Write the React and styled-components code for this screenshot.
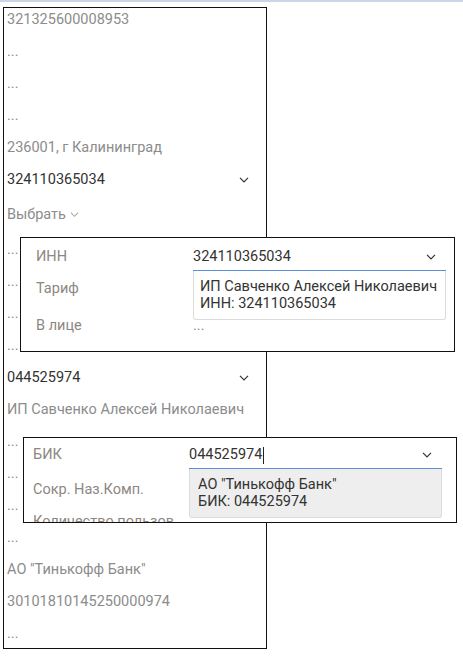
import React from 'react'
import styled, { createGlobalStyle } from 'styled-components'

const GlobalStyle = createGlobalStyle`
  body {
    margin: 0;
    background: #ffffff;
    font-family: Roboto, "Noto Sans", sans-serif;
  }
`

const Page = styled.div`
  position: relative;
  width: 463px;
  height: 657px;
  border-top: 2px solid #cdd5e4;
  box-sizing: border-box;
  overflow: hidden;
`

const Panel = styled.div`
  margin: 5px 0 0 3px;
  width: 264px;
  height: 642px;
  box-sizing: border-box;
  border: 1px solid #111;
  padding: 2px 17px 0 3px;
  display: flex;
  flex-direction: column;
  overflow: hidden;
`

const Row = styled.div`
  height: ${p => p.tall ? 38 : 32}px;
  flex: none;
  display: flex;
  align-items: flex-start;
  justify-content: space-between;
  padding-top: ${p => p.tall ? 3 : 0}px;
  box-sizing: border-box;
`

const Text = styled.span`
  font-size: 14.5px;
  line-height: 20px;
  color: ${p => p.dark ? '#333' : '#8c8c8c'};
  white-space: nowrap;
`

const Select = styled.span`
  display: inline-flex;
  align-items: center;
  gap: 4px;
  font-size: 14.5px;
  line-height: 20px;
  color: #8c8c8c;
`

const ChevronBox = styled.span`
  display: inline-flex;
  align-items: center;
  height: 20px;
`

const Chevron = ({ color = '#333', size = 10 }) => (
  <ChevronBox>
    <svg width={size} height={size * 0.6} viewBox="0 0 10 6">
      <polyline points="1,0.8 5,4.8 9,0.8" fill="none" stroke={color} strokeWidth="1.2" />
    </svg>
  </ChevronBox>
)

const Popup = styled.div`
  position: absolute;
  left: ${p => p.left}px;
  top: ${p => p.top}px;
  width: ${p => p.width}px;
  height: ${p => p.height}px;
  box-sizing: border-box;
  border: 1px solid #111;
  background: #fff;
  display: flex;
  padding-left: ${p => p.padLeft}px;
  overflow: hidden;
`

const LabelCol = styled.div`
  width: ${p => p.width}px;
  flex: none;
  display: flex;
  flex-direction: column;
  padding-top: ${p => p.padTop}px;
`

const Label = styled.div`
  height: ${p => p.h}px;
  max-width: 141px;
  flex: none;
  overflow: hidden;
  font-size: 14.5px;
  line-height: 20px;
  color: #8d8782;
  white-space: nowrap;
`

const ValueCol = styled.div`
  width: 253px;
  flex: none;
  display: flex;
  flex-direction: column;
  padding-top: ${p => p.padTop}px;
`

const Input = styled.div`
  height: 24px;
  box-sizing: border-box;
  border-bottom: 1px solid #5c8fdb;
  display: flex;
  align-items: flex-start;
  justify-content: space-between;
  padding-right: 10px;
`

const InputText = styled.span`
  font-size: 14.5px;
  line-height: 20px;
  color: #333;
  display: inline-flex;
  align-items: center;
`

const Caret = styled.span`
  display: inline-block;
  width: 1px;
  height: 17px;
  background: #222;
  margin-left: 1px;
`

const Option = styled.div`
  height: 49px;
  box-sizing: border-box;
  border: 1px solid #dcdcdc;
  border-top: none;
  border-radius: 0 0 3px 3px;
  background: ${p => p.active ? '#eeeeee' : '#ffffff'};
  padding: 7px ${p => p.padX}px 0;
  display: flex;
  flex-direction: column;
`

const OptionLine = styled.span`
  font-size: 14.5px;
  line-height: 17px;
  color: #333;
  white-space: nowrap;
`

const Muted = styled.span`
  font-size: 14.5px;
  line-height: 20px;
  color: #8c8c8c;
  margin-top: ${p => p.mt || 0}px;
`

const rows = [
  { text: '321325600008953' },
  { text: '...' },
  { text: '...' },
  { text: '...' },
  { text: '236001, г Калининград' },
  { text: '324110365034', dark: true, chevron: true },
  { select: 'Выбрать' },
  { text: '...' },
  { text: '...' },
  { text: '...' },
  { text: '...' },
  { text: '044525974', dark: true, chevron: true },
  { text: 'ИП Савченко Алексей Николаевич' },
  { text: '...' },
  { text: '...' },
  { text: '...' },
  { text: '...' },
  { text: 'АО "Тинькофф Банк"' },
  { text: '30101810145250000974' },
  { text: '...' },
]

export default function App() {
  return (
    <Page>
      <GlobalStyle />
      <Panel>
        {rows.map((r, i) =>
          r.select ? (
            <Row key={i} tall>
              <Select>{r.select}<Chevron color="#a8a8a8" size={9} /></Select>
            </Row>
          ) : (
            <Row key={i}>
              <Text dark={r.dark}>{r.text}</Text>
              {r.chevron && <Chevron />}
            </Row>
          )
        )}
      </Panel>

      <Popup left={20} top={235} width={435} height={115} padLeft={15}>
        <LabelCol width={157} padTop={9}>
          <Label h={32}>ИНН</Label>
          <Label h={37}>Тариф</Label>
          <Label h={32}>В лице</Label>
        </LabelCol>
        <ValueCol padTop={9}>
          <Input>
            <InputText>324110365034</InputText>
            <Chevron />
          </Input>
          <Option padX={6}>
            <OptionLine>ИП Савченко Алексей Николаевич</OptionLine>
            <OptionLine>ИНН: 324110365034</OptionLine>
          </Option>
          <Muted mt={-4}>...</Muted>
        </ValueCol>
      </Popup>

      <Popup left={23} top={435} width={434} height={86} padLeft={9}>
        <LabelCol width={156} padTop={7}>
          <Label h={35}>БИК</Label>
          <Label h={32}>Сокр. Наз.Комп.</Label>
          <Label h={32}>Количество пользователей</Label>
        </LabelCol>
        <ValueCol padTop={7}>
          <Input>
            <InputText>044525974<Caret /></InputText>
            <Chevron />
          </Input>
          <Option active padX={8}>
            <OptionLine>АО "Тинькофф Банк"</OptionLine>
            <OptionLine>БИК: 044525974</OptionLine>
          </Option>
        </ValueCol>
      </Popup>
    </Page>
  )
}
